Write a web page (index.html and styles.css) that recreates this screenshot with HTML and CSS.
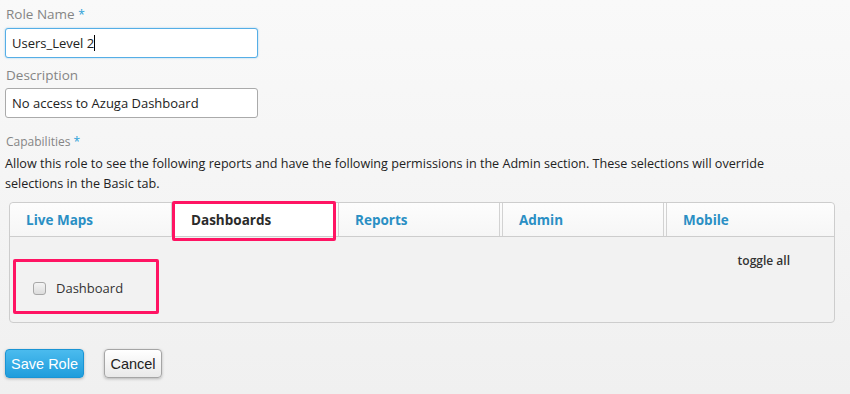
FILE: index.html
```html
<!DOCTYPE html>
<html lang="en">
<head>
    <meta charset="UTF-8">
    <title>Edit Role</title>
    <link rel="stylesheet" href="styles.css">
</head>
<body>
    <div class="form">
        <div class="field">
            <label class="label">Role Name <span class="req">*</span></label>
            <div class="input focused">Users_Level 2<span class="caret"></span></div>
        </div>
        <div class="field">
            <label class="label">Description</label>
            <div class="input">No access to Azuga Dashboard</div>
        </div>

        <div class="caps">
            <div class="caps-label">Capabilities <span class="req">*</span></div>
            <p class="caps-text">Allow this role to see the following reports and have the following permissions in the Admin section. These selections will override selections in the Basic tab.</p>
        </div>

        <div class="tabs">
            <ul class="tab-list">
                <li class="tab">Live Maps</li>
                <li class="tab active">Dashboards</li>
                <li class="tab">Reports</li>
                <li class="tab">Admin</li>
                <li class="tab">Mobile</li>
            </ul>
            <div class="tab-body">
                <div class="toggle-row"><span class="toggle">toggle all</span></div>
                <div class="perm">
                    <span class="checkbox"></span>
                    <span class="perm-name">Dashboard</span>
                </div>
            </div>
        </div>

        <div class="actions">
            <button class="btn btn-primary">Save Role</button>
            <button class="btn btn-default">Cancel</button>
        </div>
    </div>
</body>
</html>
```

FILE: styles.css
```css
body {
    margin: 0;
    font-family: "Open Sans", sans-serif;
    background: linear-gradient(#f9f9f9, #f0f0f0);
    height: 394px;
    color: #333;
}
.form {
    padding: 5px 0 0 5px;
}
.field {
    margin-bottom: 8px;
}
.label {
    display: block;
    font-size: 13.5px;
    color: #858585;
    line-height: 18px;
    margin-bottom: 4px;
    padding-left: 1px;
}
.req {
    color: #2aa0d8;
    font-size: 12px;
}
.input {
    box-sizing: border-box;
    width: 253px;
    height: 30px;
    border: 1px solid #aaa;
    border-radius: 3px;
    background: #fff;
    font-size: 13px;
    line-height: 28px;
    padding-left: 6px;
    color: #222;
}
.input.focused {
    border-color: #55aee6;
    box-shadow: 0 0 2px rgba(85, 174, 230, 0.6);
}
.caret {
    display: inline-block;
    width: 1px;
    height: 16px;
    background: #000;
    vertical-align: -3px;
}
.caps {
    margin-top: 16px;
}
.caps-label {
    font-size: 12px;
    color: #858585;
    line-height: 16px;
    padding-left: 1px;
}
.caps-text {
    margin: 4px 0 0;
    width: 800px;
    font-size: 12.6px;
    line-height: 20px;
    color: #222;
}
.tabs {
    margin: 8px 0 0 4px;
    width: 826px;
    box-sizing: border-box;
    border: 1px solid #cdcdcd;
    border-radius: 4px;
    background: #f2f2f2;
}
.tab-list {
    list-style: none;
    margin: 0;
    padding: 0;
    display: flex;
    gap: 2px;
    height: 33px;
    border-bottom: 1px solid #cdcdcd;
    background: linear-gradient(#fdfdfd, #f6f6f6);
    border-radius: 4px 4px 0 0;
}
.tab {
    box-sizing: border-box;
    width: 162px;
    position: relative;
    border-left: 1px solid #d2d2d2;
    border-right: 1px solid #d2d2d2;
    font-size: 13.5px;
    font-weight: bold;
    color: #2a8fc4;
    line-height: 31px;
    padding: 2px 0 0 16px;
}
.tab:first-child {
    border-left: none;
}
.tab:last-child {
    flex: 1;
    border-right: none;
}
.tab.active {
    color: #2b2b2b;
    background: #fff;
}
.tab.active::after {
    content: "";
    position: absolute;
    left: -3px;
    right: -1px;
    top: -2px;
    bottom: -5px;
    border: 3px solid #ff1463;
    border-radius: 2px;
}
.tab-body {
    height: 85px;
    padding: 11px 0 0 3px;
    box-sizing: border-box;
}
.toggle-row {
    text-align: right;
    padding-right: 44px;
    height: 11px;
}
.toggle {
    font-size: 12px;
    font-weight: 600;
    color: #333;
    line-height: 19px;
}
.perm {
    box-sizing: border-box;
    width: 146px;
    height: 55px;
    border: 3px solid #ff1463;
    border-radius: 2px;
    display: flex;
    align-items: center;
    padding: 3px 0 0 17px;
}
.checkbox {
    width: 11px;
    height: 11px;
    border: 1px solid #a8a8a8;
    border-radius: 3px;
    background: linear-gradient(#f4f4f4, #dcdcdc);
    margin-right: 10px;
}
.perm-name {
    font-size: 13px;
    color: #333;
}
.actions {
    margin-top: 26px;
    display: flex;
    gap: 20px;
}
.btn {
    font-family: "Liberation Sans", Arial, sans-serif;
    font-size: 14.5px;
    height: 29px;
    border-radius: 4px;
    padding: 0;
    white-space: nowrap;
    box-shadow: 0 1px 3px rgba(0, 0, 0, 0.25);
}
.btn-primary {
    width: 79px;
    color: #fff;
    border: 1px solid #1a94d4;
    background: linear-gradient(#4bbbee, #1f9ddc);
}
.btn-default {
    width: 58px;
    color: #222;
    border: 1px solid #a5a5a5;
    background: linear-gradient(#ffffff, #e9e9e9);
}
```
